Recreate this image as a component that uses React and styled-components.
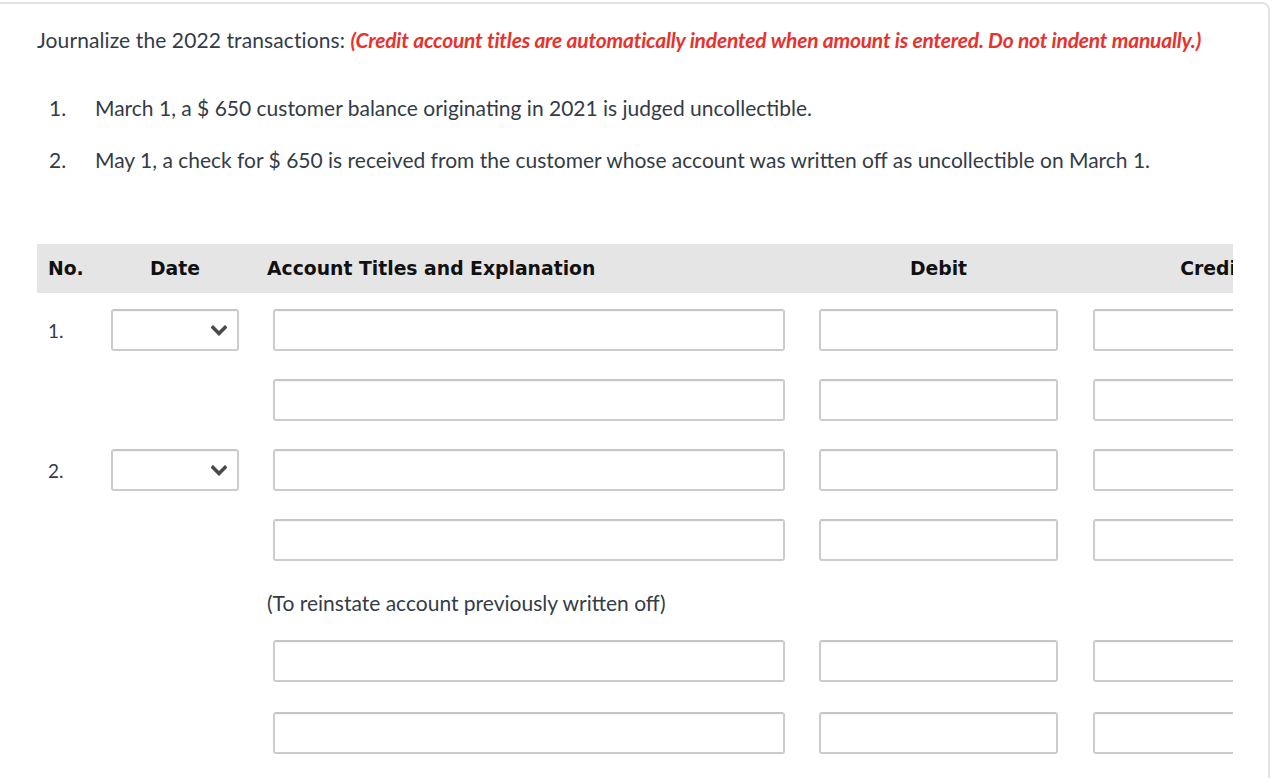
import React from 'react';
import styled, { createGlobalStyle } from 'styled-components';

const GlobalStyle = createGlobalStyle`
  html, body {
    margin: 0;
    padding: 0;
    background: #ffffff;
  }
  body {
    font-family: Lato, "Open Sans", "Liberation Sans", sans-serif;
    color: #333c47;
    overflow: hidden;
  }
`;

const Card = styled.div`
  margin: 2px 0 0 -20px;
  width: 1290px;
  height: 800px;
  box-sizing: border-box;
  border: 2px solid #e3e3e3;
  border-radius: 8px;
  padding: 23px 0 0 55px;
`;

const Prompt = styled.p`
  margin: 0;
  font-size: 21px;
  line-height: 26px;
  letter-spacing: 0.1px;
`;

const Note = styled.span`
  color: #e8322c;
  font-weight: 700;
  font-style: italic;
  letter-spacing: -0.2px;
`;

const List = styled.ol`
  list-style: none;
  margin: 42px 0 0;
  padding: 0;
  display: flex;
  flex-direction: column;
  gap: 26px;
`;

const Item = styled.li`
  display: flex;
  font-size: 21px;
  line-height: 26px;
`;

const ItemNo = styled.span`
  width: 58px;
  padding-left: 12px;
  box-sizing: border-box;
  flex-shrink: 0;
`;

const Viewport = styled.div`
  margin-top: 71px;
  width: 1196px;
  overflow: hidden;
`;

const Table = styled.div`
  width: 1400px;
`;

const HeadRow = styled.div`
  display: flex;
  align-items: center;
  height: 49px;
  background: #e5e5e5;
  font-family: "DejaVu Sans", Verdana, sans-serif;
  font-weight: 700;
  font-size: 18.8px;
  color: #111111;
`;

const Row = styled.div`
  display: flex;
  align-items: center;
  margin-top: ${p => p.$top}px;
`;

const NoCell = styled.div`
  width: 74px;
  padding-left: 11px;
  box-sizing: border-box;
  flex-shrink: 0;
  font-size: ${p => (p.$head ? 'inherit' : '19px')};
`;

const DateCell = styled.div`
  width: 128px;
  flex-shrink: 0;
  text-align: center;
  margin-right: 34px;
`;

const AccountCell = styled.div`
  width: 512px;
  flex-shrink: 0;
  margin-right: 34px;
`;

const AccountHead = styled(AccountCell)`
  margin-left: -6px;
  width: 518px;
`;

const AmountCell = styled.div`
  width: 239px;
  flex-shrink: 0;
  text-align: center;
  margin-right: ${p => p.$gap || 0}px;
`;

const Field = styled.div`
  height: 42px;
  box-sizing: border-box;
  border: 2px solid #cccccc;
  border-top-color: #c6c6c6;
  border-radius: 3px;
  background: #ffffff;
  box-shadow: inset 0 1px 1px rgba(0, 0, 0, 0.04);
`;

const Select = styled(Field)`
  display: flex;
  align-items: center;
  justify-content: flex-end;
  padding-right: 10px;
  color: #4a4a4a;
`;

const Explanation = styled.div`
  margin: 29px 0 24px 230px;
  font-size: 21px;
  line-height: 26px;
`;

const Chevron = () => (
  <svg width="16" height="11" viewBox="0 0 16 11" aria-hidden="true">
    <path d="M2 2.5 L8 8.5 L14 2.5" fill="none" stroke="currentColor" strokeWidth="3.6" strokeLinecap="square" />
  </svg>
);

const Line = ({ no, withDate, top }) => (
  <Row $top={top}>
    <NoCell>{no}</NoCell>
    <DateCell>{withDate && <Select><Chevron /></Select>}</DateCell>
    <AccountCell><Field /></AccountCell>
    <AmountCell $gap={35}><Field /></AmountCell>
    <AmountCell><Field /></AmountCell>
  </Row>
);

export default function App() {
  return (
    <>
      <GlobalStyle />
      <Card>
        <Prompt>
          Journalize the 2022 transactions:{' '}
          <Note>(Credit account titles are automatically indented when amount is entered. Do not indent manually.)</Note>
        </Prompt>
        <List>
          <Item>
            <ItemNo>1.</ItemNo>
            <span>March 1, a $ 650 customer balance originating in 2021 is judged uncollectible.</span>
          </Item>
          <Item>
            <ItemNo>2.</ItemNo>
            <span>May 1, a check for $ 650 is received from the customer whose account was written off as uncollectible on March 1.</span>
          </Item>
        </List>
        <Viewport>
          <Table>
            <HeadRow>
              <NoCell $head>No.</NoCell>
              <DateCell>Date</DateCell>
              <AccountHead>Account Titles and Explanation</AccountHead>
              <AmountCell $gap={35}>Debit</AmountCell>
              <AmountCell>Credit</AmountCell>
            </HeadRow>
            <Line no="1." withDate top={16} />
            <Line top={28} />
            <Line no="2." withDate top={28} />
            <Line top={28} />
            <Explanation>(To reinstate account previously written off)</Explanation>
            <Line top={0} />
            <Line top={30} />
          </Table>
        </Viewport>
      </Card>
    </>
  );
}
